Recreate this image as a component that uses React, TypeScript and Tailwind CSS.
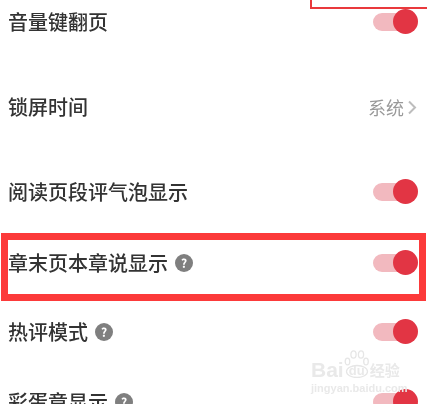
const Help = () => (
  <span className="ml-[7px] flex h-[18px] w-[18px] items-center justify-center rounded-full bg-[#7f7f7f] text-[12px] font-bold leading-none text-white">
    ?
  </span>
);

const Toggle = () => (
  <div className="relative h-[18px] w-[37px] rounded-full bg-[#f2b9bf]">
    <span className="absolute -right-[8px] -top-[4px] h-[25px] w-[25px] rounded-full bg-[#e23544]" />
  </div>
);

const Row = ({ label, help, mt, children }: { label: string; help?: boolean; mt: string; children: React.ReactNode }) => (
  <div className={`flex h-[30px] items-center justify-between pl-[8px] pr-[17px] ${mt}`}>
    <div className="flex items-center">
      <span className="text-[20px] font-medium leading-none text-[#333333]">{label}</span>
      {help && <Help />}
    </div>
    {children}
  </div>
);

export default function App() {
  return (
    <div
      className="relative h-[404px] w-[427px] overflow-hidden bg-white"
      style={{ fontFamily: '"Noto Sans CJK SC", "Noto Sans", sans-serif' }}
    >
      <div className="flex flex-col pt-[7px] blur-[0.6px]">
        <Row label="音量键翻页" mt="mt-0">
          <Toggle />
        </Row>
        <Row label="锁屏时间" mt="mt-[55px]">
          <div className="-mr-[7px] flex items-center text-[#999999]">
            <span className="text-[18px] leading-none">系统</span>
            <svg width="10" height="15" viewBox="0 0 10 15" fill="none" stroke="#bdbdbd" strokeWidth="2" className="ml-[3px]">
              <path d="M2 1.5 8 7.5 2 13.5" />
            </svg>
          </div>
        </Row>
        <Row label="阅读页段评气泡显示" mt="mt-[55px]">
          <Toggle />
        </Row>
        <Row label="章末页本章说显示" help mt="mt-[41px]">
          <Toggle />
        </Row>
        <Row label="热评模式" help mt="mt-[39px]">
          <Toggle />
        </Row>
        <Row label="彩蛋章显示" help mt="mt-[40px]">
          <Toggle />
        </Row>
      </div>

      {/* annotation boxes */}
      <div className="absolute left-[310px] top-[-4px] h-[13px] w-[130px] border-2 border-[#e9393c]" />
      <div className="absolute left-[1px] top-[233px] h-[68px] w-[425px] border-[7px] border-[#fc3a3a]" />

      {/* watermark */}
      <div
        className="absolute left-[311px] top-[350px] w-[90px] text-[#e9e9e9] blur-[0.4px]"
        style={{ fontFamily: '"Liberation Sans", sans-serif' }}
      >
        <div className="flex h-[28px] items-end">
          <span className="mb-[-2px] text-[21px] font-bold leading-[21px]">Bai</span>
          <div className="relative h-[28px] w-[25px] shrink-0">
            <svg width="25" height="28" viewBox="0 0 25 28" fill="none" stroke="#e6e6e6" strokeWidth="1.3">
              <ellipse cx="13" cy="21.5" rx="10.5" ry="6" />
              <ellipse cx="3.5" cy="11.5" rx="2.3" ry="3.4" />
              <ellipse cx="9.5" cy="4.5" rx="2.6" ry="3.6" />
              <ellipse cx="17" cy="4.5" rx="2.6" ry="3.6" />
              <ellipse cx="22" cy="11.5" rx="2.3" ry="3.4" />
            </svg>
            <span className="absolute bottom-[1px] left-[5px] text-[13px] font-bold leading-none">du</span>
          </div>
          <span
            className="ml-[1px] whitespace-nowrap text-[15px] font-bold leading-[17px]"
            style={{ fontFamily: '"Noto Sans CJK SC", sans-serif' }}
          >
            经验
          </span>
        </div>
        <div className="mt-[5px] whitespace-nowrap text-[11px] font-bold leading-[10px]">jingyan.baidu.com</div>
      </div>
    </div>
  );
}
